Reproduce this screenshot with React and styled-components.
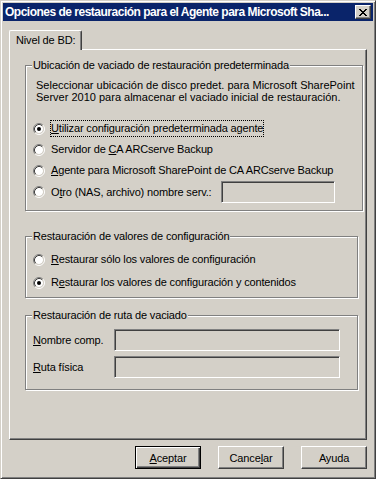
import React from 'react'
import styled, {createGlobalStyle} from 'styled-components'

const GlobalStyle = createGlobalStyle`
  html, body {
    margin: 0;
    padding: 0;
    background: #d4d0c8;
  }
  body {
    font-family: "Liberation Sans", Arial, sans-serif;
    font-size: 11px;
    letter-spacing: -0.15px;
    color: #000;
  }
  * { box-sizing: border-box; }
`

const Radio = ({checked}) => (
    <RadioBox width="12" height="12" viewBox="0 0 12 12">
        <circle cx="6" cy="6" r="4" fill="#fff" />
        <path d="M2.11 9.89 A5.5 5.5 0 0 1 9.89 2.11" stroke="#808080" fill="none" />
        <path d="M9.89 2.11 A5.5 5.5 0 0 1 2.11 9.89" stroke="#fff" fill="none" />
        <path d="M2.82 9.18 A4.5 4.5 0 0 1 9.18 2.82" stroke="#404040" fill="none" />
        <path d="M9.18 2.82 A4.5 4.5 0 0 1 2.82 9.18" stroke="#d4d0c8" fill="none" />
        {checked && <circle cx="6" cy="6" r="2" fill="#000" />}
    </RadioBox>
)

const CloseGlyph = () => (
    <svg width="8" height="7" viewBox="0 0 8 7" shapeRendering="crispEdges">
        <path
            fill="#000"
            d="M0 0h2v1h-2z M6 0h2v1h-2z M1 1h2v1h-2z M5 1h2v1h-2z M2 2h4v1h-4z M3 3h2v1h-2z M2 4h4v1h-4z M1 5h2v1h-2z M5 5h2v1h-2z M0 6h2v1h-2z M6 6h2v1h-2z"
        />
    </svg>
)

const RadioRow = ({checked, focused, height, children, extra}) => (
    <Row height={height}>
        <Radio checked={checked} />
        <RadioLabel focused={focused}>{children}</RadioLabel>
        {extra}
    </Row>
)

const App = () => {
    return (
        <>
            <GlobalStyle />
            <Window>
                <TitleBar>
                    <TitleText>Opciones de restauración para el Agente para Microsoft Sha...</TitleText>
                    <CloseButton><CloseGlyph /></CloseButton>
                </TitleBar>

                <Body>
                    <TabStrip>
                        <Tab>Nivel de BD:</Tab>
                    </TabStrip>

                    <Panel>
                        <Group>
                            <Legend>Ubicación de vaciado de restauración predeterminada</Legend>
                            <GroupBody pad="7px 7px 7px 7px">
                                <Description>
                                    Seleccionar ubicación de disco predet. para Microsoft SharePoint
                                    <br />
                                    Server 2010 para almacenar el vaciado inicial de restauración.
                                </Description>
                                <RadioList>
                                    <RadioRow checked focused>
                                        <Key>U</Key>tilizar configuración predeterminada agente
                                    </RadioRow>
                                    <RadioRow>
                                        Servidor de <Key>C</Key>A ARCserve Backup
                                    </RadioRow>
                                    <RadioRow>
                                        <Key>A</Key>gente para Microsoft SharePoint de CA ARCserve Backup
                                    </RadioRow>
                                    <RadioRow height={22} extra={<Field width={114} />}>
                                        O<Key>t</Key>ro (NAS, archivo) nombre serv.:
                                    </RadioRow>
                                </RadioList>
                            </GroupBody>
                        </Group>

                        <Group gapTop={19}>
                            <Legend>Restauración de valores de configuración</Legend>
                            <GroupBody pad="5px 7px 3px 7px">
                                <RadioRow height={23}>
                                    <Key>R</Key>estaurar sólo los valores de configuración
                                </RadioRow>
                                <RadioRow height={23} checked>
                                    R<Key>e</Key>staurar los valores de configuración y contenidos
                                </RadioRow>
                            </GroupBody>
                        </Group>

                        <Group gapTop={11}>
                            <Legend>Restauración de ruta de vaciado</Legend>
                            <GroupBody pad="7px 17px 11px 7px">
                                <FieldRows>
                                    <FieldRow>
                                        <FieldLabel><Key>N</Key>ombre comp.</FieldLabel>
                                        <Field />
                                    </FieldRow>
                                    <FieldRow>
                                        <FieldLabel><Key>R</Key>uta física</FieldLabel>
                                        <Field />
                                    </FieldRow>
                                </FieldRows>
                            </GroupBody>
                        </Group>
                    </Panel>

                    <ButtonRow>
                        <Button primary><Key>A</Key>ceptar</Button>
                        <Button>Cance<Key>l</Key>ar</Button>
                        <Button>Ayuda</Button>
                    </ButtonRow>
                </Body>
            </Window>
        </>
    )
}

const Window = styled.div`
    width: 376px;
    height: 479px;
    display: flex;
    flex-direction: column;
    padding: 2px;
    background: #d4d0c8;
    border: 1px solid;
    border-color: #d4d0c8 #404040 #404040 #d4d0c8;
    box-shadow: inset 1px 1px 0 #fff, inset -1px -1px 0 #808080;
`

const TitleBar = styled.div`
    height: 18px;
    display: flex;
    align-items: center;
    justify-content: space-between;
    gap: 2px;
    padding: 0 2px 0 2px;
    background: #0a246a;
`

const TitleText = styled.div`
    color: #fff;
    font-weight: bold;
    font-size: 12px;
    letter-spacing: -0.5px;
    white-space: nowrap;
    overflow: hidden;
    min-width: 0;
`

const CloseButton = styled.div`
    width: 16px;
    height: 14px;
    flex: none;
    display: flex;
    align-items: center;
    justify-content: center;
    background: #d4d0c8;
    border: 1px solid;
    border-color: #fff #404040 #404040 #fff;
    box-shadow: inset -1px -1px 0 #808080;
    padding-top: 1px;
`

const Body = styled.div`
    flex: 1;
    display: flex;
    flex-direction: column;
    padding: 9px 6px 7px 6px;
`

const TabStrip = styled.div`
    display: flex;
    height: 19px;
`

const Tab = styled.div`
    position: relative;
    z-index: 1;
    width: 73px;
    height: 20px;
    padding: 3px 0 0 6px;
    background: #d4d0c8;
    border-left: 1px solid #fff;
    border-top: 1px solid #fff;
    border-right: 1px solid #404040;
    border-top-left-radius: 2px;
    border-top-right-radius: 2px;
    box-shadow: inset -1px 0 0 #808080;
    line-height: 13px;
`

const Panel = styled.div`
    flex: 1;
    padding: 9px 8px 0 15px;
    border: 1px solid;
    border-color: #fff #404040 #404040 #fff;
    box-shadow: inset -1px -1px 0 #808080;
`

const Group = styled.fieldset`
    margin: ${p => p.gapTop || 0}px 0 0 0;
    padding: 0;
    border: 1px solid #808080;
    box-shadow: inset 1px 1px 0 #fff, 1px 1px 0 #fff;
`

const Legend = styled.legend`
    margin-left: 6px;
    padding: 0 1px;
    line-height: 13px;
    background: #d4d0c8;
`

const GroupBody = styled.div`
    padding: ${p => p.pad};
`

const Description = styled.div`
    margin-left: 3px;
    line-height: 12px;
    white-space: nowrap;
    letter-spacing: 0;
`

const RadioList = styled.div`
    margin-top: 15px;
`

const Row = styled.div`
    display: flex;
    align-items: center;
    height: ${p => p.height || 21}px;
`

const RadioBox = styled.svg`
    flex: none;
    margin-right: 5px;
`

const RadioLabel = styled.span`
    padding: 2px 1px;
    line-height: 13px;
    outline: ${p => (p.focused ? '1px dotted #000' : 'none')};
    outline-offset: -1px;
    white-space: nowrap;
`

const Key = styled.span`
    text-decoration: underline;
`

const Field = styled.div`
    width: ${p => (p.width ? p.width + 'px' : 'auto')};
    flex: ${p => (p.width ? 'none' : '1')};
    height: 22px;
    margin-left: ${p => (p.width ? '8px' : '0')};
    background: #d4d0c8;
    border: 1px solid;
    border-color: #808080 #fff #fff #808080;
    box-shadow: inset 1px 1px 0 #404040, inset -1px -1px 0 #d4d0c8;
`

const FieldRows = styled.div`
    display: flex;
    flex-direction: column;
    gap: 5px;
`

const FieldRow = styled.div`
    display: flex;
    align-items: center;
`

const FieldLabel = styled.span`
    width: 81px;
    flex: none;
`

const ButtonRow = styled.div`
    display: flex;
    justify-content: flex-end;
    gap: 17px;
    margin-top: 6px;
`

const Button = styled.button`
    width: 66px;
    height: 23px;
    padding: 0;
    font-family: inherit;
    font-size: 11px;
    letter-spacing: inherit;
    color: #000;
    background: #d4d0c8;
    border: 1px solid;
    border-color: ${p => (p.primary ? '#000' : '#fff #404040 #404040 #fff')};
    box-shadow: ${p => (p.primary
        ? 'inset 1px 1px 0 #fff, inset -1px -1px 0 #404040, inset -2px -2px 0 #808080'
        : 'inset -1px -1px 0 #808080')};
`

export default App
